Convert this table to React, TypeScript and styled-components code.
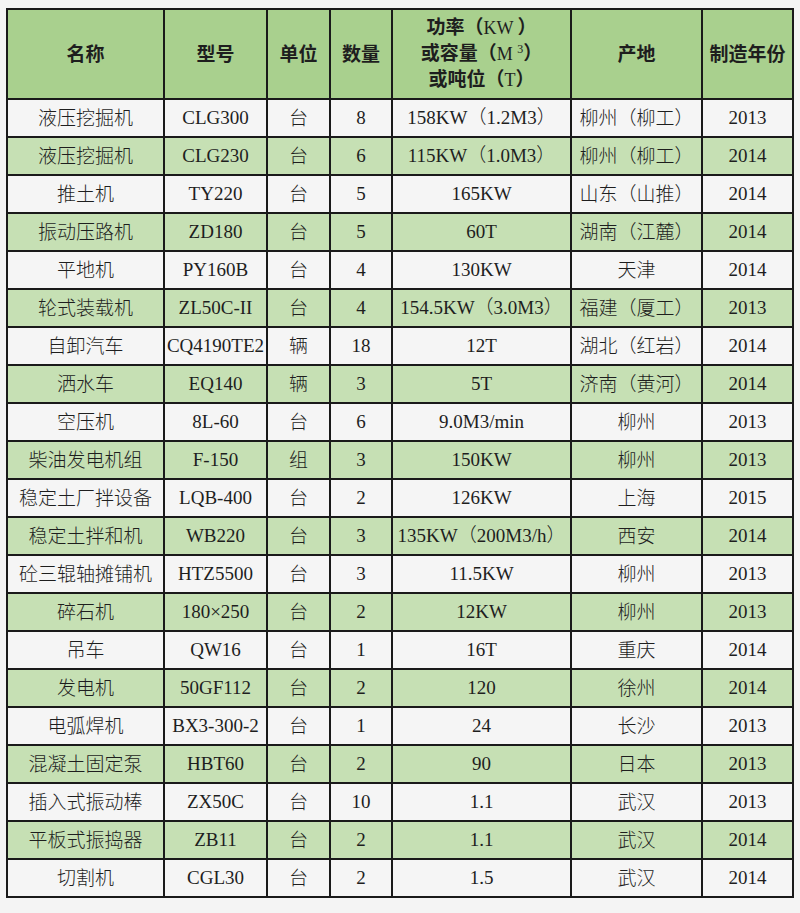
import React, { FC } from "react";
import styled, { createGlobalStyle } from "styled-components";

const GlobalStyle = createGlobalStyle`
  body {
    margin: 0;
    background-color: #f4f4f4;
  }
`;

const Page = styled.div`
  width: 800px;
  height: 913px;
  padding: 8px 0 0 6px;
  box-sizing: border-box;
`;

const Table = styled.table`
  border-collapse: collapse;
  table-layout: fixed;
  width: 788px;
  color: #1e1e1e;
`;

const HeadCell = styled.th`
  height: 86px;
  padding: 0 0 2px;
  border: 2px solid #1a1a1a;
  background-color: #a9d08e;
  font-family: "Noto Sans CJK SC", sans-serif;
  font-weight: 700;
  font-size: 19px;
  line-height: 24px;
  text-align: center;
  vertical-align: middle;
`;

// latin letters inside the header are set in a thin serif
const Latin = styled.span`
  font-family: "Liberation Serif", serif;
  font-weight: 400;
  font-size: 18px;
`;

const Sup = styled.sup`
  font-family: "Liberation Serif", serif;
  font-weight: 400;
  font-size: 12px;
  line-height: 0;
`;

const Row = styled.tr<{ $green: boolean }>`
  background-color: ${(p) => (p.$green ? "#c6e0b4" : "#f5f5f5")};
`;

// chinese cells sit a little higher than latin ones, as in the scan
const Cell = styled.td<{ $cjk: boolean }>`
  height: ${(p) => (p.$cjk ? "33px" : "35px")};
  padding: 0 0 ${(p) => (p.$cjk ? "3px" : "1px")};
  border: 2px solid #1a1a1a;
  font-family: ${(p) =>
    p.$cjk
      ? `"Noto Sans CJK SC", "Liberation Serif", sans-serif`
      : `"Liberation Serif", "Noto Sans CJK SC", serif`};
  font-weight: 300;
  font-size: 19px;
  line-height: 24px;
  text-align: center;
  vertical-align: middle;
  white-space: nowrap;
  overflow: hidden;
`;

const widths = [157, 103, 63, 62, 179, 131, 91];
const cjkCols = [0, 2, 5];

const rows: string[][] = [
  ["液压挖掘机", "CLG300", "台", "8", "158KW（1.2M3）", "柳州（柳工）", "2013"],
  ["液压挖掘机", "CLG230", "台", "6", "115KW（1.0M3）", "柳州（柳工）", "2014"],
  ["推土机", "TY220", "台", "5", "165KW", "山东（山推）", "2014"],
  ["振动压路机", "ZD180", "台", "5", "60T", "湖南（江麓）", "2014"],
  ["平地机", "PY160B", "台", "4", "130KW", "天津", "2014"],
  ["轮式装载机", "ZL50C-II", "台", "4", "154.5KW（3.0M3）", "福建（厦工）", "2013"],
  ["自卸汽车", "CQ4190TE2", "辆", "18", "12T", "湖北（红岩）", "2014"],
  ["洒水车", "EQ140", "辆", "3", "5T", "济南（黄河）", "2014"],
  ["空压机", "8L-60", "台", "6", "9.0M3/min", "柳州", "2013"],
  ["柴油发电机组", "F-150", "组", "3", "150KW", "柳州", "2013"],
  ["稳定土厂拌设备", "LQB-400", "台", "2", "126KW", "上海", "2015"],
  ["稳定土拌和机", "WB220", "台", "3", "135KW（200M3/h）", "西安", "2014"],
  ["砼三辊轴摊铺机", "HTZ5500", "台", "3", "11.5KW", "柳州", "2013"],
  ["碎石机", "180×250", "台", "2", "12KW", "柳州", "2013"],
  ["吊车", "QW16", "台", "1", "16T", "重庆", "2014"],
  ["发电机", "50GF112", "台", "2", "120", "徐州", "2014"],
  ["电弧焊机", "BX3-300-2", "台", "1", "24", "长沙", "2013"],
  ["混凝土固定泵", "HBT60", "台", "2", "90", "日本", "2013"],
  ["插入式振动棒", "ZX50C", "台", "10", "1.1", "武汉", "2013"],
  ["平板式振捣器", "ZB11", "台", "2", "1.1", "武汉", "2014"],
  ["切割机", "CGL30", "台", "2", "1.5", "武汉", "2014"],
];

const App: FC = () => {
  return (
    <Page>
      <GlobalStyle />
      <Table>
        <colgroup>
          {widths.map((w, i) => (
            <col key={i} style={{ width: w }} />
          ))}
        </colgroup>
        <thead>
          <tr>
            <HeadCell>名称</HeadCell>
            <HeadCell>型号</HeadCell>
            <HeadCell>单位</HeadCell>
            <HeadCell>数量</HeadCell>
            <HeadCell>
              功率（<Latin>KW </Latin>）
              <br />
              或容量（<Latin>M </Latin>
              <Sup>3</Sup>）
              <br />
              或吨位（<Latin>T</Latin>）
            </HeadCell>
            <HeadCell>产地</HeadCell>
            <HeadCell>制造年份</HeadCell>
          </tr>
        </thead>
        <tbody>
          {rows.map((r, i) => (
            <Row key={i} $green={i % 2 === 1}>
              {r.map((c, j) => (
                <Cell key={j} $cjk={cjkCols.includes(j)}>
                  {c}
                </Cell>
              ))}
            </Row>
          ))}
        </tbody>
      </Table>
    </Page>
  );
};

export default App;
